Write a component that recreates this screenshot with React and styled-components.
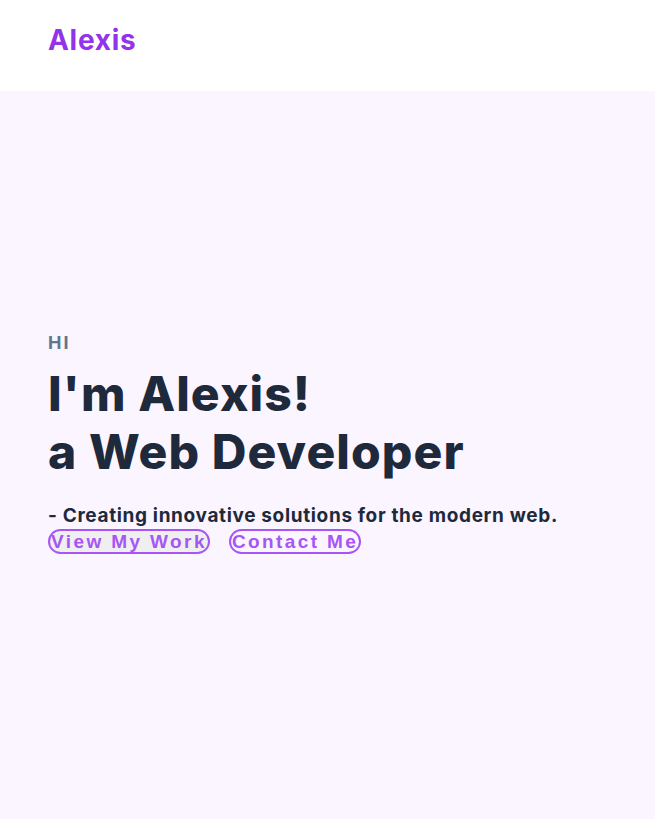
import React from 'react';
import styled, { createGlobalStyle } from 'styled-components';

const Global = createGlobalStyle`
  html, body { margin: 0; padding: 0; }
  body { font-family: "Inter", "Open Sans", sans-serif; background: #faf5ff; }
  * { box-sizing: border-box; }
`;

const Header = styled.header`
  height: 91px;
  background: #ffffff;
  display: flex;
  align-items: center;
  padding: 0 48px 12px;
`;

const Logo = styled.div`
  font-family: "Inter", sans-serif;
  font-weight: 700;
  font-size: 28px;
  color: #9333ea;
  letter-spacing: 0.7px;
`;

const Hero = styled.main`
  min-height: calc(100vh - 91px);
  background: #faf5ff;
  display: flex;
  align-items: center;
  padding: 0 48px 24px;
`;

const Content = styled.div`
  display: flex;
  flex-direction: column;
`;

const Hi = styled.div`
  font-weight: 700;
  font-size: 18px;
  letter-spacing: 2px;
  color: #64748b;
  margin-bottom: 12px;
`;

const Title = styled.h1`
  margin: 0;
  font-weight: 800;
  font-size: 48px;
  line-height: 58px;
  color: #1e293b;
  letter-spacing: 1.1px;
`;

const Sub = styled.p`
  margin: 22px 0 0;
  font-weight: 700;
  font-size: 19px;
  line-height: 26px;
  color: #1e293b;
  letter-spacing: 0.65px;
`;

const Actions = styled.div`
  display: flex;
  gap: 19px;
`;

const Button = styled.button`
  font-family: "Liberation Sans", Arial, sans-serif;
  font-weight: 700;
  font-size: 19px;
  letter-spacing: 2.4px;
  color: #a855f7;
  background: ${p => (p.$filled ? '#efefef' : 'transparent')};
  border: 2px solid #a855f7;
  border-radius: 9999px;
  padding: 0 1px;
  height: 25px;
  line-height: 21px;
`;

export default function App() {
  return (
    <>
      <Global />
      <Header>
        <Logo>Alexis</Logo>
      </Header>
      <Hero>
        <Content>
          <Hi>HI</Hi>
          <Title>
            I'm Alexis!
            <br />
            a Web Developer
          </Title>
          <Sub>- Creating innovative solutions for the modern web.</Sub>
          <Actions>
            <Button $filled>View My Work</Button>
            <Button>Contact Me</Button>
          </Actions>
        </Content>
      </Hero>
    </>
  );
}
